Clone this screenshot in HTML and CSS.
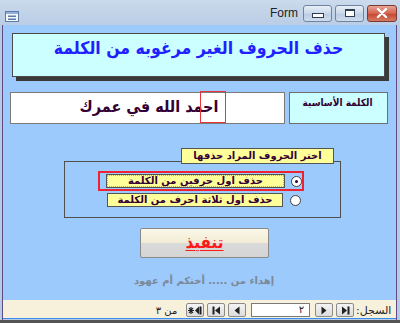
FILE: index.html
```html
<!DOCTYPE html>
<html lang="ar">
<head>
<meta charset="utf-8">
<title>Form</title>
<link rel="stylesheet" href="styles.css">
</head>
<body>
<div class="window">
  <div class="titlebar">
    <div class="app-icon">
      <svg width="14" height="11" viewBox="0 0 14 11">
        <rect x="0.5" y="0.5" width="13" height="10" fill="#f4f8fc" stroke="#5b7ba8"/>
        <rect x="1" y="1" width="12" height="2" fill="#8fb1dc"/>
        <rect x="3" y="4.5" width="8" height="1.5" fill="#5b7ba8"/>
        <rect x="3" y="7.5" width="8" height="1.5" fill="#5b7ba8"/>
      </svg>
    </div>
    <div class="title-text">Form</div>
    <div class="caption-btns">
      <div class="cap-btn"><span class="min-glyph"></span></div>
      <div class="cap-btn"><span class="max-glyph"></span></div>
      <div class="cap-btn close">
        <svg width="12" height="10" viewBox="0 0 12 10"><path d="M2 1 L10 9 M10 1 L2 9" stroke="#fff" stroke-width="2.4" stroke-linecap="round"/></svg>
      </div>
    </div>
  </div>
  <div class="frame">
    <div class="client">
      <div class="title-box">حذف الحروف الغير مرغوبه من الكلمة</div>
      <div class="word-row">
        <div class="word-box">
          <span class="word-text">احمد الله في عمرك</span>
          <span class="caret-box"></span>
        </div>
        <div class="word-label">الكلمة الأساسية</div>
      </div>
      <div class="group-wrap">
        <div class="legend">اختر الحروف المراد حذفها</div>
        <div class="group">
          <div class="option selected">
            <div class="opt-label focus wide">حذف اول حرفين من الكلمة</div>
            <div class="radio checked"></div>
          </div>
          <div class="option">
            <div class="opt-label">حذف اول ثلاثة احرف من الكلمة</div>
            <div class="radio"></div>
          </div>
        </div>
      </div>
      <div class="run-btn"><span class="run-text">تنفيذ</span></div>
      <div class="dedication">إهداء من ..... أختكم أم عهود</div>
    </div>
    <div class="navbar">
      <span class="nav-count">من ٣</span>
      <div class="nav-btn">
        <svg width="14" height="9" viewBox="0 0 14 9"><path d="M1 2 L5 7 M5 2 L1 7 M0 4.5 H6 M3 1 V8" stroke="#202020" stroke-width="1.2"/><path d="M11 0.5 L7 4.5 L11 8.5 Z" fill="#202020"/><rect x="11.5" y="0.5" width="2" height="8" fill="#202020"/></svg>
      </div>
      <div class="nav-btn">
        <svg width="9" height="9" viewBox="0 0 9 9"><rect x="0.5" y="0.5" width="2" height="8" fill="#202020"/><path d="M8 0.5 L3 4.5 L8 8.5 Z" fill="#202020"/></svg>
      </div>
      <div class="nav-btn">
        <svg width="6" height="9" viewBox="0 0 6 9"><path d="M5.5 0.5 L0.5 4.5 L5.5 8.5 Z" fill="#202020"/></svg>
      </div>
      <div class="nav-field">٢</div>
      <div class="nav-btn">
        <svg width="6" height="9" viewBox="0 0 6 9"><path d="M0.5 0.5 L5.5 4.5 L0.5 8.5 Z" fill="#202020"/></svg>
      </div>
      <div class="nav-btn">
        <svg width="9" height="9" viewBox="0 0 9 9"><path d="M1 0.5 L6 4.5 L1 8.5 Z" fill="#202020"/><rect x="6.5" y="0.5" width="2" height="8" fill="#202020"/></svg>
      </div>
      <span class="nav-label">السجل:</span>
    </div>
  </div>
</div>
</body>
</html>
```
FILE: styles.css
```css
html, body {
  margin: 0;
  padding: 0;
  background: #b8cce4;
}
.window {
  width: 400px;
  height: 323px;
  background: linear-gradient(#cbdaec, #b6cbe4 30px, #b6cbe4);
  display: flex;
  flex-direction: column;
  font-family: "DejaVu Sans", sans-serif;
  overflow: hidden;
  border-bottom: 3px solid #545454;
  box-sizing: border-box;
}
.titlebar {
  height: 25px;
  flex: none;
  display: flex;
  align-items: center;
  padding: 0 3px 0 5px;
  box-sizing: border-box;
}
.app-icon {
  width: 14px;
  height: 11px;
  margin-top: -1px;
}
.title-text {
  margin-left: auto;
  font-family: "Liberation Sans", Arial, sans-serif;
  font-size: 12px;
  color: #222;
  margin-right: 5px;
  margin-top: 1px;
}
.caption-btns {
  display: flex;
  gap: 3px;
  margin-top: 1px;
}
.cap-btn {
  width: 27px;
  height: 15px;
  border: 1px solid #6f84a3;
  border-radius: 3px;
  background: linear-gradient(#e8eff8, #c9d7e9 50%, #b9cbe2 51%, #cfdcec);
  box-sizing: content-box;
  display: flex;
  align-items: center;
  justify-content: center;
}
.cap-btn.close {
  width: 28px;
  border-color: #7a3a32;
  background: linear-gradient(#e8a493, #d2624e 50%, #c4452f 51%, #d77a62);
}
.min-glyph {
  width: 10px;
  height: 3px;
  border: 1px solid #2f3d52;
  background: #fff;
  margin-top: 5px;
}
.max-glyph {
  width: 8px;
  height: 5px;
  border: 1px solid #2f3d52;
  border-top-width: 2px;
  background: #fff;
}
.frame {
  flex: 1;
  margin: 0 3px 0 2px;
  border-left: 1px solid #5f4a86;
  border-right: 1px solid #5f4a86;
  display: flex;
  flex-direction: column;
}
.client {
  height: 275px;
  background: #9ccafc;
  padding: 8px 0 0 9px;
  box-sizing: border-box;
  display: flex;
  flex-direction: column;
  align-items: flex-start;
}
.title-box {
  width: 373px;
  height: 44px;
  box-sizing: border-box;
  border: 1px solid #4a4a4a;
  background: #ccffff;
  box-shadow: 4px 4px 0 #3a3a3a;
  color: #1f1fff;
  font-family: "DejaVu Sans Condensed", "DejaVu Sans", sans-serif;
  font-weight: bold;
  font-size: 17.5px;
  text-align: center;
  line-height: 29px;
  direction: rtl;
}
.word-row {
  display: flex;
  gap: 4px;
  margin-top: 15px;
  margin-left: -2px;
}
.word-box {
  position: relative;
  width: 275px;
  height: 32px;
  box-sizing: border-box;
  border: 1px solid #7a7a7a;
  background: #fff;
  text-align: center;
  direction: rtl;
}
.word-text {
  font-family: "DejaVu Sans Condensed", "DejaVu Sans", sans-serif;
  font-weight: bold;
  font-size: 16px;
  line-height: 28px;
  color: #330033;
  padding-left: 3px;
}
.caret-box {
  position: absolute;
  left: 189px;
  top: -2px;
  width: 26px;
  height: 32px;
  border: 1px solid #e8343c;
  box-sizing: border-box;
}
.word-label {
  width: 99px;
  height: 32px;
  box-sizing: border-box;
  border: 1px solid #6f6f6f;
  background: #ccffff;
  color: #330033;
  font-family: "DejaVu Sans Condensed", "DejaVu Sans", sans-serif;
  font-size: 10px;
  font-weight: bold;
  text-align: center;
  line-height: 20px;
  direction: rtl;
  padding-right: 2px;
}
.group-wrap {
  margin-top: 24px;
  margin-left: 52px;
  width: 277px;
}
.legend {
  position: relative;
  z-index: 1;
  margin-left: 117px;
  width: 153px;
  height: 16px;
  box-sizing: border-box;
  border: 1px solid #555;
  background: #ffff99;
  color: #330033;
  font-size: 10px;
  font-weight: bold;
  text-align: center;
  line-height: 14px;
  direction: rtl;
}
.group {
  margin-top: -3px;
  height: 57px;
  box-sizing: border-box;
  border: 1px solid #4f4f4f;
  padding: 9px 0 0 33px;
}
.option {
  width: 206px;
  height: 20px;
  box-sizing: border-box;
  border: 2px solid transparent;
  display: flex;
  align-items: center;
  margin-top: -1px;
}
.option.selected {
  border-color: #ee2233;
  margin-top: 0;
}
.opt-label {
  width: 176px;
  height: 14px;
  box-sizing: border-box;
  border: 1px solid #555;
  background: #ffff99;
  color: #330033;
  font-size: 10px;
  font-weight: bold;
  text-align: center;
  line-height: 12px;
  direction: rtl;
  margin-left: 7px;
}
.opt-label.wide {
  width: 179px;
  margin-left: 6px;
}
.opt-label.focus {
  outline: 1px dotted #b0b080;
  outline-offset: -2px;
}
.radio {
  width: 11px;
  height: 11px;
  box-sizing: border-box;
  border-radius: 50%;
  border: 1px solid #404040;
  background: #fff;
  margin-left: 6px;
  display: flex;
  align-items: center;
  justify-content: center;
}
.option:not(.selected) .radio {
  margin-left: 7px;
}
.radio.checked::after {
  content: "";
  width: 3px;
  height: 3px;
  border-radius: 50%;
  background: #330033;
}
.run-btn {
  margin-top: 10px;
  margin-left: 128px;
  width: 129px;
  height: 30px;
  box-sizing: border-box;
  border: 1px solid #8a8a8a;
  border-radius: 2px;
  background: linear-gradient(#fbf8ea, #f2ecd4 48%, #dadada 52%, #d4d4d4);
  text-align: center;
  direction: rtl;
}
.run-text {
  color: #ff1a1a;
  font-family: "DejaVu Sans Condensed", "DejaVu Sans", sans-serif;
  font-size: 17px;
  font-weight: bold;
  line-height: 27px;
  text-decoration: underline;
  text-decoration-thickness: 1px;
  text-underline-offset: 2px;
}
.dedication {
  margin-top: 17px;
  width: 394px;
  margin-left: -9px;
  text-align: center;
  padding-left: 8px;
  box-sizing: border-box;
  color: #7c8898;
  font-size: 10px;
  font-weight: bold;
  direction: rtl;
}
.navbar {
  height: 19px;
  background: #f7f1dc;
  border-bottom: 1px solid #3a8cf0;
  display: flex;
  align-items: center;
  font-size: 11px;
  color: #222;
  box-sizing: border-box;
  padding-top: 2px;
}
.nav-count {
  margin-left: 147px;
  width: 33px;
  direction: rtl;
  text-align: center;
  font-size: 10px;
}
.nav-btn {
  width: 18px;
  height: 14px;
  box-sizing: border-box;
  border: 1px solid #8b8b8b;
  border-radius: 2px;
  background: linear-gradient(#f4f4f4, #dcdcdc);
  margin-left: 3px;
  display: flex;
  align-items: center;
  justify-content: center;
}
.nav-field {
  width: 59px;
  height: 14px;
  box-sizing: border-box;
  border: 1px solid #7a7a7a;
  background: #fff;
  margin-left: 5px;
  margin-right: 2px;
  text-align: right;
  padding-right: 5px;
  font-size: 10px;
  line-height: 12px;
}
.nav-label {
  margin-left: 2px;
  direction: rtl;
  font-size: 11px;
}
```
